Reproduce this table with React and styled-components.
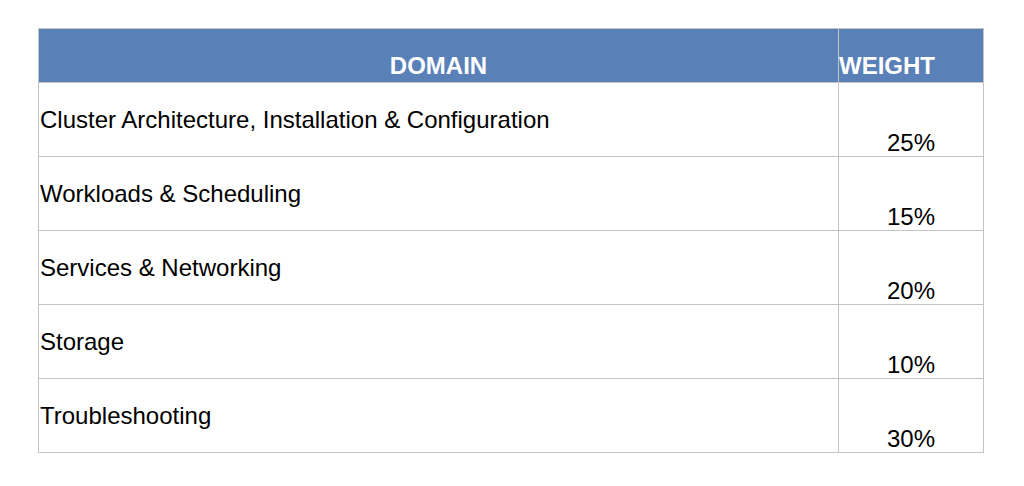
import React from 'react';
import styled, { createGlobalStyle } from 'styled-components';

const GlobalStyle = createGlobalStyle`
  body {
    margin: 0;
    background: #FFFFFF;
    font-family: "Liberation Sans", Arial, sans-serif;
  }
`;

const rows = [
  { domain: 'Cluster Architecture, Installation & Configuration', weight: '25%' },
  { domain: 'Workloads & Scheduling', weight: '15%' },
  { domain: 'Services & Networking', weight: '20%' },
  { domain: 'Storage', weight: '10%' },
  { domain: 'Troubleshooting', weight: '30%' },
];

const App = () => {
  return (
    <Page>
      <GlobalStyle />
      <Table>
        <thead>
          <tr>
            <HeadCell>DOMAIN</HeadCell>
            <HeadCell weight>WEIGHT</HeadCell>
          </tr>
        </thead>
        <tbody>
          {rows.map((row) => (
            <tr key={row.domain}>
              <DomainCell>{row.domain}</DomainCell>
              <WeightCell>{row.weight}</WeightCell>
            </tr>
          ))}
        </tbody>
      </Table>
    </Page>
  );
};

const Page = styled.div`
  padding: 28px 0 0 38px;
`;

const Table = styled.table`
  border-collapse: collapse;
  width: 946px;
  table-layout: fixed;
`;

const HeadCell = styled.th`
  background-color: #5A80B8;
  color: #FFFFFF;
  font-size: 24px;
  font-weight: bold;
  height: 54px;
  padding: 0 0 3px ${(props) => (props.weight ? '0' : '0')};
  box-sizing: border-box;
  text-align: ${(props) => (props.weight ? 'left' : 'center')};
  vertical-align: bottom;
  width: ${(props) => (props.weight ? '145px' : 'auto')};
  border: 1px solid #C4C4C4;
  border-bottom: none;
  line-height: 26px;
`;

const DomainCell = styled.td`
  font-size: 24px;
  color: #000000;
  height: 74px;
  box-sizing: border-box;
  padding: 0 0 0 1px;
  vertical-align: middle;
  border: 1px solid #C4C4C4;
  line-height: 26px;
`;

const WeightCell = styled.td`
  font-size: 24px;
  color: #000000;
  text-align: center;
  vertical-align: bottom;
  padding: 0;
  border: 1px solid #C4C4C4;
  line-height: 26px;
`;

export default App;
